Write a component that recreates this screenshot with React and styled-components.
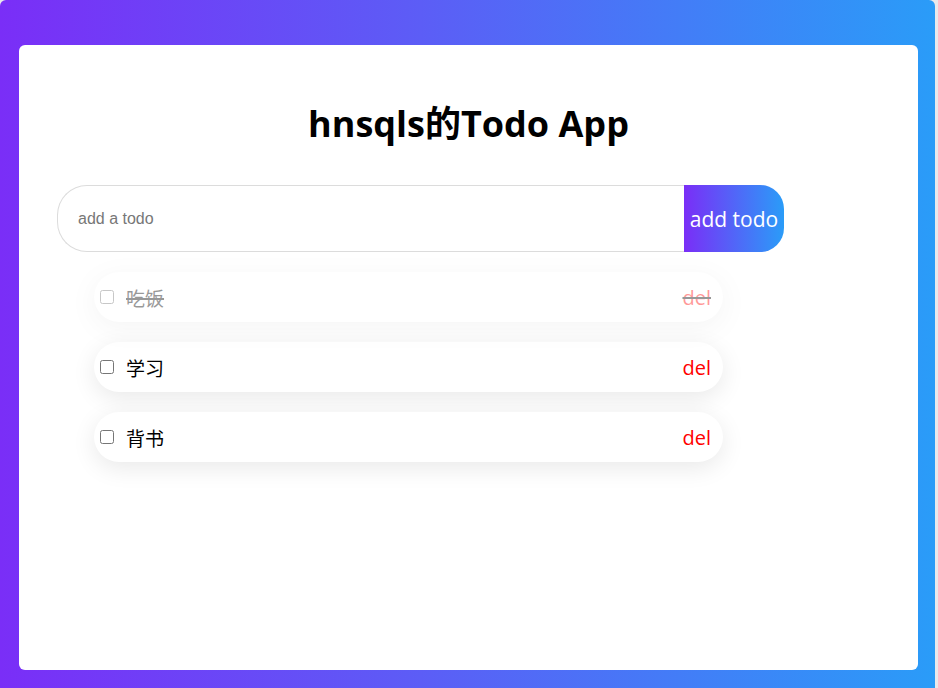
import React, { useState } from 'react';
import styled, { createGlobalStyle } from 'styled-components';

const GlobalStyle = createGlobalStyle`
  html, body {
    margin: 0;
    padding: 0;
    background: #e9e9ec;
  }
  body {
    font-family: "Open Sans", "Noto Sans CJK SC", sans-serif;
  }
`;

const Backdrop = styled.div`
  box-sizing: border-box;
  width: 935px;
  height: 688px;
  padding: 45px 17px 18px 19px;
  border-radius: 6px 6px 0 0;
  background: linear-gradient(90deg, #7a2ef7 0%, #5c5df6 45%, #2a9cf8 100%);
`;

const Card = styled.div`
  box-sizing: border-box;
  height: 100%;
  background: #fff;
  border-radius: 6px;
  padding: 55px 38px 0 38px;
`;

const Title = styled.h1`
  margin: 0 0 37px;
  text-align: center;
  font-family: "Open Sans", "Noto Sans CJK SC", sans-serif;
  font-weight: 700;
  font-size: 36px;
  line-height: 48px;
  color: #000;
`;

const Form = styled.form`
  display: flex;
  width: 727px;
  height: 67px;
`;

const Input = styled.input`
  flex: 1;
  box-sizing: border-box;
  height: 100%;
  border: 1px solid #dcdcdc;
  border-right: none;
  border-radius: 30px 0 0 30px;
  padding: 0 20px;
  font-family: "Liberation Sans", Arial, sans-serif;
  font-size: 16px;
  outline: none;
  &::placeholder {
    color: #777;
  }
`;

const AddButton = styled.button`
  width: 100px;
  height: 100%;
  border: none;
  border-radius: 0 24px 24px 0;
  background: linear-gradient(90deg, #7a2ef7, #2a9cf8);
  color: #fff;
  font-family: "Open Sans", sans-serif;
  font-size: 21px;
  padding: 0;
  cursor: pointer;
`;

const List = styled.ul`
  list-style: none;
  margin: 20px 0 0 37px;
  padding: 0;
  width: 629px;
  display: flex;
  flex-direction: column;
  gap: 20px;
`;

const Item = styled.li`
  display: flex;
  align-items: center;
  height: 50px;
  padding: 0 12px 0 2px;
  border-radius: 25px;
  background: #fff;
  box-shadow: 0 6px 24px rgba(0, 0, 0, 0.09);
  opacity: ${(p) => (p.$done ? 0.4 : 1)};
`;

const Check = styled.input`
  margin: 3px 3px 3px 4px;
  width: 14px;
  height: 14px;
`;

const Label = styled.span`
  flex: 1;
  margin-left: 9px;
  font-family: "Noto Sans CJK SC", sans-serif;
  font-size: 19px;
  color: #000;
  span {
    text-decoration: ${(p) => (p.$done ? 'line-through' : 'none')};
    text-decoration-thickness: 2px;
  }
`;

const Del = styled.span`
  font-family: "Open Sans", sans-serif;
  font-size: 20px;
  color: #f00;
  cursor: pointer;
  text-decoration: ${(p) => (p.$done ? 'line-through' : 'none')};
  text-decoration-color: #000;
  text-decoration-thickness: 2px;
`;

const initial = [
  { id: 1, text: '吃饭', done: true },
  { id: 2, text: '学习', done: false },
  { id: 3, text: '背书', done: false },
];

export default function App() {
  const [todos] = useState(initial);
  return (
    <>
      <GlobalStyle />
      <Backdrop>
        <Card>
          <Title>hnsqls的Todo App</Title>
          <Form onSubmit={(e) => e.preventDefault()}>
            <Input placeholder="add a todo" />
            <AddButton type="submit">add todo</AddButton>
          </Form>
          <List>
            {todos.map((t) => (
              <Item key={t.id} $done={t.done}>
                <Check type="checkbox" readOnly />
                <Label $done={t.done}>
                  <span>{t.text}</span>
                </Label>
                <Del $done={t.done}>del</Del>
              </Item>
            ))}
          </List>
        </Card>
      </Backdrop>
    </>
  );
}
